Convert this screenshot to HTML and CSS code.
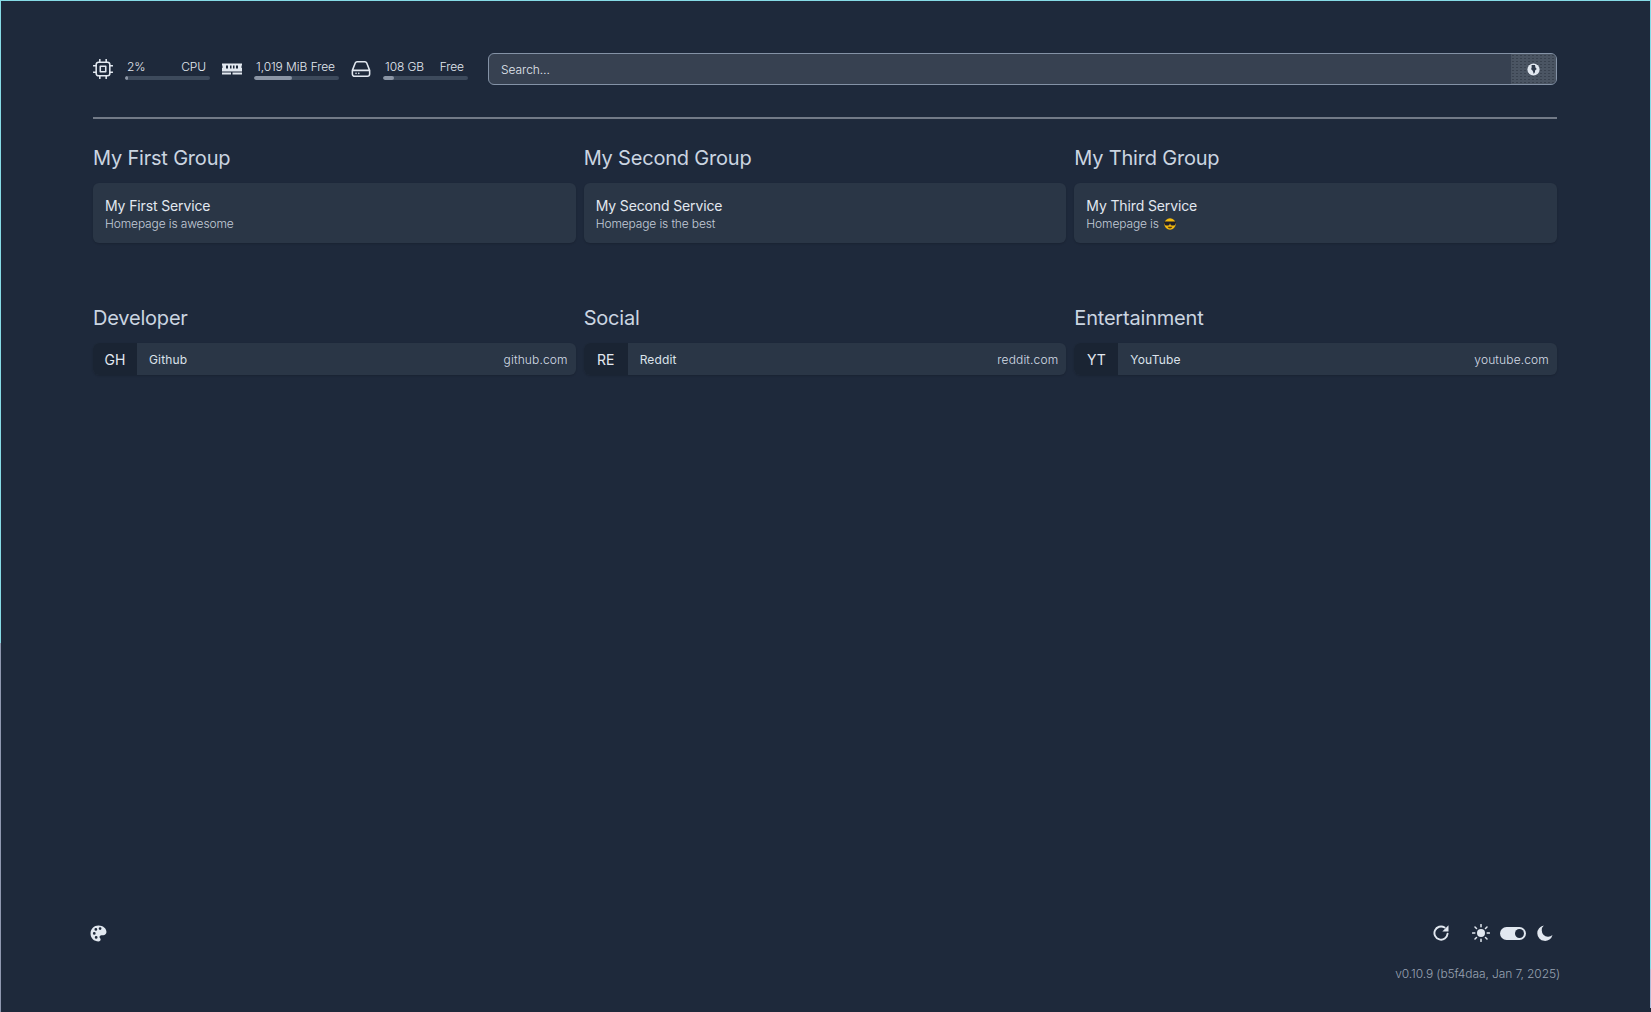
FILE: index.html
```html
<!DOCTYPE html>
<html lang="en">
<head>
<meta charset="utf-8">
<title>Homepage</title>
<link rel="stylesheet" href="styles.css">
</head>
<body>
<div class="page">
  <header class="top">
    <div class="resource">
      <svg class="res-icon" viewBox="1 1 22 22" fill="none" stroke="currentColor" stroke-width="1.700" stroke-linecap="round" stroke-linejoin="round"><rect x="4.500" y="4.500" width="15" height="15" rx="2.500"/><rect x="9" y="9" width="6" height="6"/><path d="M8.500 1.500v3M15.500 1.500v3M8.500 19.500v3M15.500 19.500v3M1.500 8.500h3M1.500 15.500h3M19.500 8.500h3M19.500 15.500h3"/></svg>
      <div class="res-body">
        <div class="res-text"><span class="res-val">2%</span><span>CPU</span></div>
        <div class="meter"><div class="meter-fill" style="width:3%"></div></div>
      </div>
    </div>
    <div class="resource">
      <svg class="res-icon" viewBox="0 0 20 20" fill="currentColor"><path fill-rule="evenodd" d="M0 4.500h20v2h-.5v2.500h.5v3.500H0V9h.5V6.500H0zM4 6.500v3h2v-3zM8 6.500v3h1.500v-3zM11 6.500v3h1.500v-3zM14 6.500v3h2v-3z"/><path d="M0 13.500h9v2H0zM10.500 13.500H20v2h-9.500z"/></svg>
      <div class="res-body">
        <div class="res-text"><span class="res-val">1,019 MiB</span><span>Free</span></div>
        <div class="meter"><div class="meter-fill" style="width:45%"></div></div>
      </div>
    </div>
    <div class="resource">
      <svg class="res-icon" viewBox="1 1 22 22" fill="none" stroke="currentColor" stroke-width="1.700" stroke-linecap="round" stroke-linejoin="round"><path d="M2.500 13.500 5.800 5.200A2 2 0 0 1 7.700 4h8.600a2 2 0 0 1 1.900 1.200l3.300 8.300v4a2.500 2.500 0 0 1-2.500 2.500H5a2.500 2.500 0 0 1-2.500-2.500zM2.500 13.500h19M6.500 16.800h.1M9.500 16.800h.1"/></svg>
      <div class="res-body">
        <div class="res-text"><span class="res-val">108 GB</span><span>Free</span></div>
        <div class="meter"><div class="meter-fill" style="width:13%"></div></div>
      </div>
    </div>
    <div class="search">
      <span class="search-text">Search…</span>
      <span class="search-btn">
        <svg class="search-icon" viewBox="0 0 16 16"><circle cx="8" cy="8" r="6.500" fill="#e2e8f0"/><path d="M6 3.200h3.600l.5 2.600 1.400 1.700-1.700 1.200-.3 2.300-1.200 1.700-.8-2.700-1-1.500-1.100-.7.600-2z" fill="#2f3a4b"/></svg>
      </span>
    </div>
  </header>

  <section class="groups">
    <div class="group">
      <h2 class="group-title">My First Group</h2>
      <div class="service"><div class="service-name">My First Service</div><div class="service-desc">Homepage is awesome</div></div>
    </div>
    <div class="group">
      <h2 class="group-title">My Second Group</h2>
      <div class="service"><div class="service-name">My Second Service</div><div class="service-desc">Homepage is the best</div></div>
    </div>
    <div class="group">
      <h2 class="group-title">My Third Group</h2>
      <div class="service"><div class="service-name">My Third Service</div><div class="service-desc">Homepage is <svg class="emoji" viewBox="0 0 16 16"><circle cx="8" cy="8" r="6.500" fill="#f2b90f"/><path d="M1.200 5h13.600v1.600l-.8 2a1.800 1.800 0 0 1-1.700 1H10a2 2 0 0 1-1.700-2L8 7.200l-.3.400a2 2 0 0 1-1.700 2H3.700A1.800 1.800 0 0 1 2 8.600l-.8-2z" fill="#1f1f28"/><path d="M5.200 11.200h5.600a3 3 0 0 1-5.600 0z" fill="#5b3a10"/></svg></div></div>
    </div>
  </section>

  <section class="bookmarks">
    <div class="group">
      <h2 class="group-title">Developer</h2>
      <div class="bookmark"><span class="abbr">GH</span><span class="bm-main"><span class="bm-name">Github</span><span class="bm-url">github.com</span></span></div>
    </div>
    <div class="group">
      <h2 class="group-title">Social</h2>
      <div class="bookmark"><span class="abbr">RE</span><span class="bm-main"><span class="bm-name">Reddit</span><span class="bm-url">reddit.com</span></span></div>
    </div>
    <div class="group">
      <h2 class="group-title">Entertainment</h2>
      <div class="bookmark"><span class="abbr">YT</span><span class="bm-main"><span class="bm-name">YouTube</span><span class="bm-url">youtube.com</span></span></div>
    </div>
  </section>

  <footer class="footer">
    <div class="footer-row">
      <svg class="palette" viewBox="0 0 16 16"><path fill-rule="evenodd" fill="#e2e8f0" d="M8 .5C3.800.5.500 3.700.500 8s3.300 7.500 7.500 7.500c1.300 0 2-.8 2-1.800 0-.5-.2-.9-.5-1.200-.3-.4-.5-.7-.5-1.200 0-1 .8-1.700 1.800-1.700h1.700c1.500 0 3-1.100 3-3C15.500 3.200 12.200.5 8 .5zM4 9.200a1.300 1.300 0 1 0 0-2.600 1.300 1.300 0 0 0 0 2.600zM5.500 5.500a1.300 1.300 0 1 0 0-2.600 1.300 1.300 0 0 0 0 2.600zM9.500 4.700a1.300 1.300 0 1 0 0-2.600 1.300 1.300 0 0 0 0 2.600zM5.800 13a1.300 1.300 0 1 0 0-2.600 1.300 1.300 0 0 0 0 2.600z"/></svg>
      <div class="foot-right">
        <svg class="foot-icon" viewBox="0 0 16 16" fill="none" stroke="#e2e8f0" stroke-width="1.900" stroke-linecap="round"><path d="M14.600 8.700A6.600 6.600 0 1 1 11.600 2.500"/><path d="M15.500.3v6.200H9.300z" fill="#e2e8f0" stroke="none"/></svg>
        <div class="theme">
          <svg class="sun" viewBox="0 0 18 18" fill="#e2e8f0"><circle cx="9" cy="9" r="4"/><path d="M9 .6v2.200M9 15.200v2.200M.6 9h2.200M15.200 9h2.200M3 3l1.500 1.500M13.500 13.500 15 15M3 15l1.500-1.500M13.500 4.500 15 3" stroke="#e2e8f0" stroke-width="1.500" stroke-linecap="round"/></svg>
          <span class="toggle"><span class="knob"></span></span>
          <svg class="foot-icon" viewBox="0 0 16 16"><path fill="#e2e8f0" d="M6.800.6A7.700 7.700 0 1 0 15.500 10 6.400 6.400 0 0 1 6.800.6z"/></svg>
        </div>
      </div>
    </div>
    <div class="version">v0.10.9 (b5f4daa, Jan 7, 2025)</div>
  </footer>
</div>
</body>
</html>
```
FILE: styles.css
```css
* { box-sizing: border-box; }
html, body { margin: 0; height: 100%; }
body {
  background: #1e293b;
  font-family: Inter, "Noto Sans", sans-serif;
  color: #cbd5e1;
  overflow: hidden;
}
.page {
  height: 1012px;
  padding: 54px 94px 0 93px;
  display: flex;
  flex-direction: column;
  background:
    linear-gradient(#86dbe6, #86dbe6) left top / 100% 1px no-repeat,
    linear-gradient(#86dbe6 0, #86dbe6 643px, #8f98b0 643px) left top / 1px 100% no-repeat,
    linear-gradient(#86dbe6 0, #86dbe6 969px, #aebbd6 969px, #aebbd6 1008px, transparent 1008px) right top / 1px 100% no-repeat;
}
.top {
  display: flex;
  align-items: center;
  height: 65px;
  padding-bottom: 33px;
  border-bottom: 2px solid #727a87;
  flex: none;
}
.resource {
  display: flex;
  align-items: center;
  margin-right: 12px;
}
.res-icon { width: 20px; height: 20px; color: #e2e8f0; flex: none; }
.res-body { margin-left: 12px; width: 85px; }
.res-text {
  display: flex;
  justify-content: space-between;
  padding: 0 4px 0 2px;
  font-size: 12px;
  font-weight: 300;
  line-height: 16px;
  letter-spacing: -0.08px;
  color: #e2e8f0;
}
.meter {
  height: 4px;
  margin-top: 1px;
  border-radius: 2px;
  overflow: hidden;
  background-color: #3d4a5c;
  background-image: radial-gradient(#5a6472 35%, transparent 40%);
  background-size: 2px 2px;
}
.meter-fill { height: 100%; background: #8b95a5; border-radius: 2px; }
.search {
  flex: 1;
  margin-left: 8px;
  height: 32px;
  display: flex;
  align-items: stretch;
  justify-content: space-between;
  background: #374151;
  border: 1px solid #8492a6;
  border-radius: 6px;
  overflow: hidden;
}
.search-text {
  padding-left: 12px;
  font-size: 12px;
  font-weight: 300;
  line-height: 32px;
  color: #e2e8f0;
  letter-spacing: -0.05px;
}
.search-btn {
  width: 45px;
  display: flex;
  align-items: center;
  justify-content: center;
  background-color: #4b5563;
  background-image: radial-gradient(#39424f 35%, transparent 40%);
  background-size: 4px 3px;
}
.search-icon { width: 15px; height: 15px; margin-left: -1px; }
.groups, .bookmarks {
  display: grid;
  grid-template-columns: repeat(3, 1fr);
  gap: 8px;
  flex: none;
}
.groups { margin-top: 24px; }
.bookmarks { margin-top: 60px; }
.group-title {
  margin: 0;
  font-size: 20px;
  font-weight: 400;
  line-height: 30px;
  letter-spacing: -0.2px;
  color: #cbd5e1;
}
.service {
  margin-top: 10px;
  height: 60px;
  padding: 14px 12px 0;
  background: #2a3646;
  border-radius: 6px;
  box-shadow: 0 1px 2px rgba(0, 0, 0, .15);
}
.service-name { font-size: 14px; line-height: 18px; font-weight: 400; color: #e2e8f0; letter-spacing: -0.13px; }
.service-desc { font-size: 12px; line-height: 17px; font-weight: 300; color: #c3ccd8; letter-spacing: -0.13px; display: flex; align-items: center; gap: 4px; }
.emoji { width: 14px; height: 14px; }
.bookmark {
  margin-top: 10px;
  height: 32px;
  display: flex;
  border-radius: 6px;
  overflow: hidden;
  background: #2a3646;
  box-shadow: 0 1px 2px rgba(0, 0, 0, .15);
}
.abbr {
  width: 44px;
  flex: none;
  background: #1a2433;
  text-align: center;
  font-size: 14px;
  line-height: 33px;
  color: #e2e8f0;
}
.bm-main {
  flex: 1;
  display: flex;
  justify-content: space-between;
  align-items: center;
  padding: 0 8px 0 12px;
  font-size: 12px;
  letter-spacing: 0.14px;
  color: #dbe2ea;
}
.bm-url { font-weight: 300; color: #d5dde7; }
.footer { margin-top: auto; padding-bottom: 30px; flex: none; }
.footer-row { display: flex; justify-content: space-between; align-items: center; margin-left: -2px; padding-right: 4px; }
.foot-icon { width: 16px; height: 16px; display: block; }
.palette { width: 17px; height: 17px; display: block; margin-left: -1px; }
.foot-right { display: flex; align-items: center; gap: 23px; }
.theme { display: flex; align-items: center; }
.sun { width: 18px; height: 18px; }
.toggle {
  width: 26px;
  height: 13px;
  margin: 0 11px 0 10px;
  border-radius: 7px;
  background: #e2e8f0;
  display: flex;
  justify-content: flex-end;
  align-items: center;
  padding-right: 2px;
}
.knob { width: 9px; height: 9px; border-radius: 50%; background: #1e293b; }
.version {
  margin-top: 24px;
  margin-right: -3px;
  text-align: right;
  font-size: 12px;
  font-weight: 300;
  line-height: 16px;
  letter-spacing: -0.1px;
  color: #98a2b1;
}
```
